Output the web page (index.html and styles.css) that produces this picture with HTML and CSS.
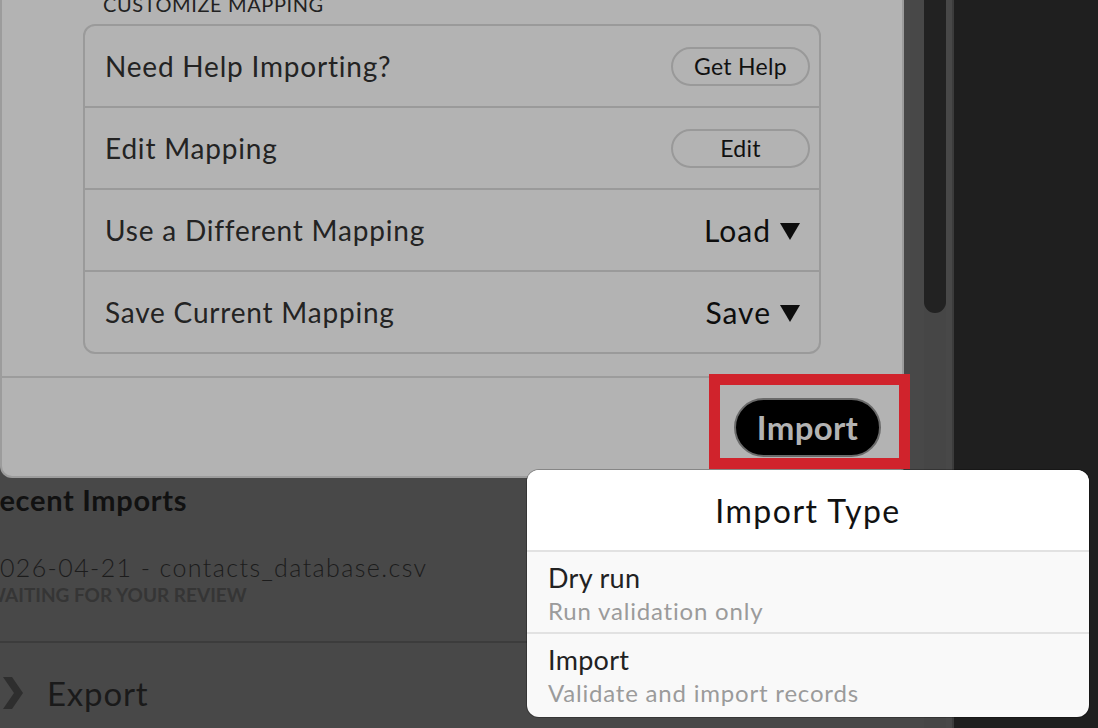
FILE: index.html
```html
<!DOCTYPE html>
<html lang="en">
<head>
    <meta charset="UTF-8">
    <meta name="viewport" content="width=device-width, initial-scale=1.0">
    <title>Import</title>
    <link rel="stylesheet" href="styles.css">
</head>
<body>
    <div class="app">
        <div class="main">
            <div class="content">
                <section class="card">
                    <div class="card-body">
                        <h2 class="section-title">Customize Mapping</h2>
                        <ul class="mapping-list">
                            <li class="mapping-row">
                                <span class="label">Need Help Importing?</span>
                                <button class="pill">Get Help</button>
                            </li>
                            <li class="mapping-row">
                                <span class="label">Edit Mapping</span>
                                <button class="pill">Edit</button>
                            </li>
                            <li class="mapping-row">
                                <span class="label">Use a Different Mapping</span>
                                <span class="dropdown">Load
                                    <svg class="caret" width="20" height="17" viewBox="0 0 20 17"><path d="M0 0 H20 L10 17 Z" fill="#0d0d0d"/></svg>
                                </span>
                            </li>
                            <li class="mapping-row">
                                <span class="label">Save Current Mapping</span>
                                <span class="dropdown">Save
                                    <svg class="caret" width="20" height="17" viewBox="0 0 20 17"><path d="M0 0 H20 L10 17 Z" fill="#0d0d0d"/></svg>
                                </span>
                            </li>
                        </ul>
                    </div>
                    <div class="card-footer">
                        <div class="import-wrap">
                            <button class="import-btn">Import</button>
                        </div>
                    </div>
                </section>

                <section class="recent">
                    <h3 class="recent-title">Recent Imports</h3>
                    <div class="recent-item">
                        <div class="recent-name">2026-04-21 - contacts_database.csv</div>
                        <div class="recent-status">Waiting for your review</div>
                    </div>
                </section>

                <div class="export-row">
                    <svg class="chevron" width="20" height="32" viewBox="0 0 20 32"><path d="M0 0 H9 L20 16 L9 32 H0 L11 16 Z" fill="#2e2e2e"/></svg>
                    <span class="export-label">Export</span>
                </div>
            </div>
            <div class="rail">
                <div class="track"><div class="thumb"></div></div>
            </div>
        </div>
        <div class="side"></div>
    </div>

    <div class="sheet">
        <div class="sheet-title">Import Type</div>
        <div class="sheet-option">
            <div class="option-title">Dry run</div>
            <div class="option-desc">Run validation only</div>
        </div>
        <div class="sheet-option">
            <div class="option-title">Import</div>
            <div class="option-desc">Validate and import records</div>
        </div>
    </div>
</body>
</html>
```

FILE: styles.css
```css
* {
    box-sizing: border-box;
}
html, body {
    margin: 0;
    padding: 0;
    height: 100%;
}
body {
    font-family: Lato, "Open Sans", sans-serif;
    background-color: #1f1f1f;
    overflow: hidden;
}
.app {
    display: flex;
    height: 728px;
}
.main {
    display: flex;
    width: 954px;
    background-color: #484848;
    border-right: 2px solid #3c3c3c;
}
.content {
    width: 904px;
}
.rail {
    width: 48px;
    padding: 0 6px 0 20px;
}
.track {
    height: 100%;
    background-color: #464646;
}
.thumb {
    height: 313px;
    background-color: #222;
    border-radius: 0 0 11px 11px;
}
.side {
    flex: 1;
}

/* card */
.card {
    margin-top: -8px;
    background-color: #b3b3b3;
    border: 2px solid #9c9c9c;
    border-top: 0;
    border-radius: 0 0 12px 12px;
}
.card-body {
    padding: 0 81px 22px;
}
.section-title {
    margin: 0 0 8px 20px;
    font-size: 20px;
    line-height: 24px;
    font-weight: 400;
    letter-spacing: 0.6px;
    text-transform: uppercase;
    color: #222;
}
.mapping-list {
    list-style: none;
    margin: 0;
    padding: 0;
    border: 2px solid #9a9a9a;
    border-radius: 12px;
}
.mapping-row {
    display: flex;
    align-items: center;
    justify-content: space-between;
    height: 80px;
    padding: 0 9px 0 20px;
}
.mapping-row + .mapping-row {
    height: 82px;
    border-top: 2px solid #9a9a9a;
}
.label {
    font-size: 28px;
    letter-spacing: 0.8px;
    color: #232323;
}
.pill {
    width: 139px;
    height: 39px;
    border: 2px solid #999;
    border-radius: 20px;
    background: transparent;
    font-family: inherit;
    font-size: 23px;
    letter-spacing: 0.3px;
    color: #111;
    padding: 0;
}
.dropdown {
    display: flex;
    align-items: baseline;
    gap: 9px;
    padding-right: 10px;
    font-size: 30px;
    letter-spacing: 1px;
    color: #0d0d0d;
}
.caret {
    align-self: center;
    margin-top: 3px;
}
.card-footer {
    display: flex;
    justify-content: flex-end;
    align-items: center;
    height: 100px;
    padding-right: 21px;
    border-top: 2px solid #9c9c9c;
}
.import-wrap {
    position: relative;
}
.import-wrap::after {
    content: "";
    position: absolute;
    top: -24px;
    left: -25px;
    right: -29px;
    bottom: -12px;
    border: 11px solid #d0232c;
}
.import-btn {
    display: block;
    width: 147px;
    height: 59px;
    padding: 0;
    border: 2px solid #6a6a6a;
    border-radius: 30px;
    background-color: #000;
    color: #b3b3b3;
    font-family: inherit;
    font-size: 33px;
    font-weight: 700;
    letter-spacing: 0.3px;
}

/* below the card */
.recent {
    margin-left: -19px;
    border-bottom: 2px solid #3c3c3c;
    padding-bottom: 35px;
}
.recent-title {
    margin: 4px 0 0;
    font-size: 29px;
    line-height: 36px;
    font-weight: 700;
    letter-spacing: 0.7px;
    color: #111;
}
.recent-item {
    margin-top: 34px;
}
.recent-name {
    padding-left: 3px;
    font-size: 25px;
    line-height: 30px;
    font-weight: 300;
    letter-spacing: 1.4px;
    color: #1c1c1c;
}
.recent-status {
    margin-top: 2px;
    padding-left: 5px;
    font-size: 19px;
    line-height: 22px;
    font-weight: 700;
    text-transform: uppercase;
    color: #353535;
}
.export-row {
    display: flex;
    align-items: center;
    gap: 24px;
    padding: 30px 0 0 3px;
}
.export-label {
    font-size: 33px;
    line-height: 40px;
    letter-spacing: 0.8px;
    color: #1a1a1a;
}

/* action sheet */
.sheet {
    position: absolute;
    left: 527px;
    top: 470px;
    width: 562px;
    height: 247px;
    background-color: #f9f9f9;
    border-radius: 12px;
    overflow: hidden;
    box-shadow: 0 0 0 1px rgba(0, 0, 0, 0.25);
}
.sheet-title {
    height: 82px;
    line-height: 82px;
    text-align: center;
    font-size: 32px;
    letter-spacing: 1.5px;
    color: #111;
    background-color: #fff;
    border-bottom: 2px solid #e2e2e2;
}
.sheet-option {
    height: 80px;
    padding: 10px 21px 0;
}
.sheet-option + .sheet-option {
    height: 83px;
    border-top: 2px solid #e2e2e2;
}
.option-title {
    font-size: 27px;
    line-height: 32px;
    letter-spacing: 0.3px;
    color: #222;
}
.option-desc {
    margin-top: 2px;
    font-size: 24px;
    line-height: 30px;
    letter-spacing: 0.8px;
    color: #9b9b9b;
}
```
